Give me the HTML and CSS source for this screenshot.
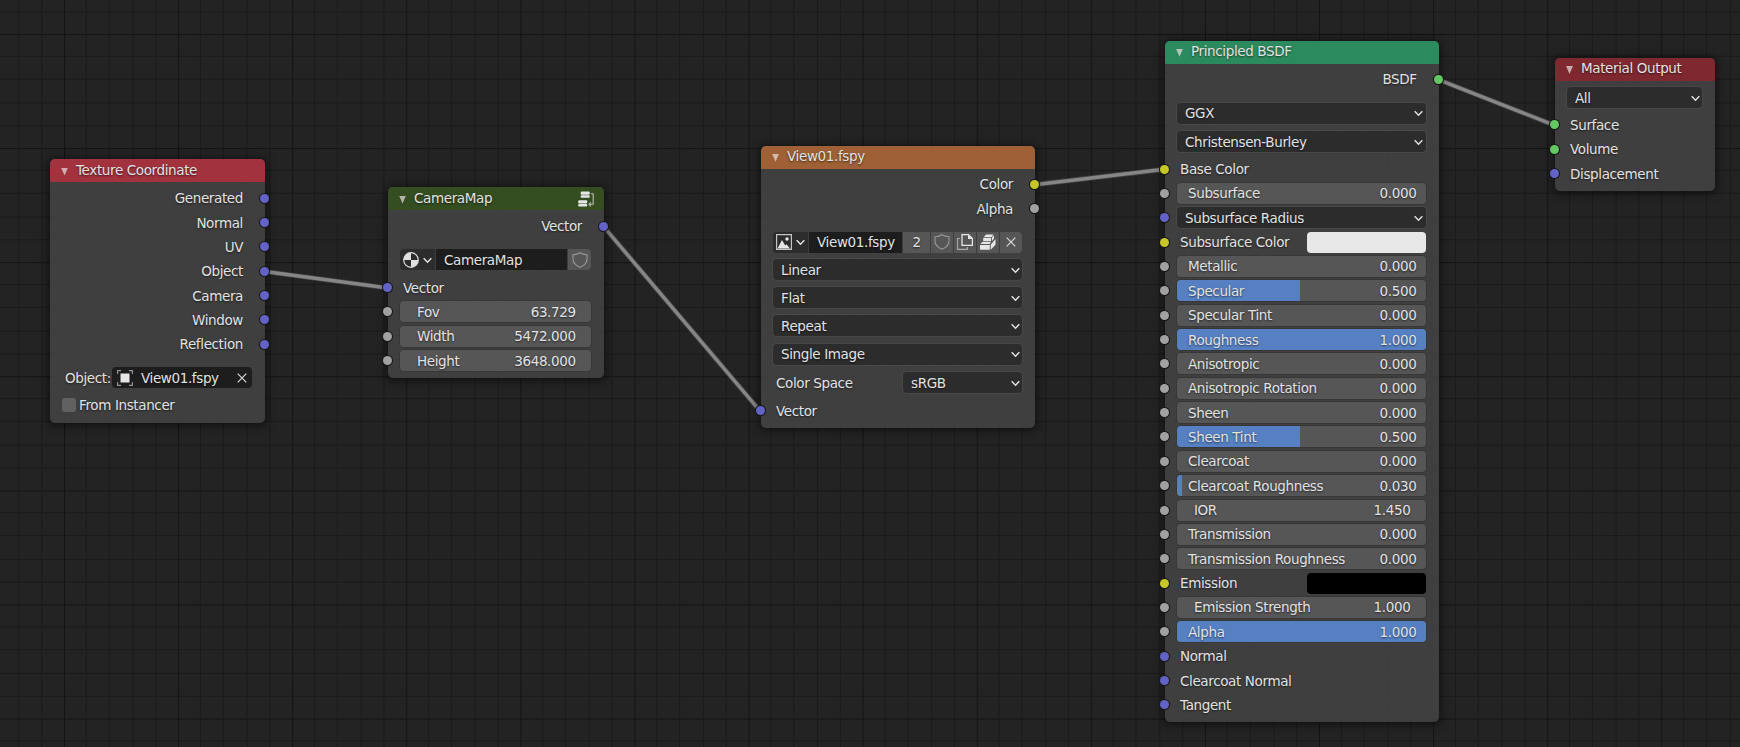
FILE: index.html
```
<!DOCTYPE html>
<html lang="en">
<head>
    <meta charset="UTF-8">
    <meta name="viewport" content="width=device-width, initial-scale=1.0">
    <title>Shader Editor</title>
    <link rel="stylesheet" href="styles.css">
</head>
<body>
    <svg class="symbols" width="0" height="0">
        <symbol id="chevron" viewBox="0 0 8 6"><path d="M.6 1 4 4.500 7.400 1" fill="none" stroke="currentColor" stroke-width="1.300"/></symbol>
        <symbol id="cross" viewBox="0 0 10 10"><path d="M.7.7 9.300 9.300M9.300.7.7 9.300" fill="none" stroke="currentColor" stroke-width="1.100"/></symbol>
        <symbol id="shield" viewBox="0 0 16 16"><path d="M8 .8C6 2.200 3.600 2.700 1 2.700V7c0 3.800 2.800 6.600 7 8.200C12.200 13.600 15 10.800 15 7V2.700C12.400 2.700 10 2.200 8 .8Z" fill="none" stroke="currentColor" stroke-width="1.100"/></symbol>
        <symbol id="object" viewBox="0 0 16 16"><path d="M3.500 3.500h9v9h-9z" fill="#e6e6e6"/><path d="M.6 4V.6H4M12 .6h3.400V4M15.400 12v3.400H12M4 15.400H.6V12" fill="none" stroke="#999" stroke-width="1.100"/></symbol>
        <symbol id="texture" viewBox="0 0 16 16"><circle cx="8" cy="8" r="7.300" fill="none" stroke="#e0e0e0" stroke-width="1.200"/><path d="M8 .8V8h7.200A7.200 7.200 0 0 1 8 15.200V8H.8A7.200 7.200 0 0 1 8 .8Z" fill="#e0e0e0"/></symbol>
        <symbol id="group" viewBox="0 0 16 16"><rect x="2.700" y=".5" width="9" height="3.300" rx="1"/><rect x="2.700" y="4.300" width="9" height="2.400" rx=".8"/><rect x=".2" y="9.300" width="9" height="3.300" rx="1"/><rect x=".2" y="13.100" width="9" height="2.400" rx=".8"/><path d="M12.800 2.700h2.400v10.600h-3.600M13 11.300l-2 2 2 2" fill="none" stroke="#b9c0b2" stroke-width="1.100"/></symbol>
        <symbol id="image" viewBox="0 0 16 16"><path d="M.6.6h14.800v14.800H.6z" fill="none" stroke="#c4c4c4" stroke-width="1.200"/><path d="M1.500 14.500 6 6l3.200 5.500 1.300-1.300 3.500 4.300z" fill="#e6e6e6"/><circle cx="11" cy="5" r="1.700" fill="#e6e6e6"/></symbol>
        <symbol id="copy" viewBox="0 0 16 16"><path d="M3 4.500H.6v10.900h9.800V13" fill="none" stroke="#aaa" stroke-width="1.100"/><path d="M5 .7h6.500l3.900 3.900v6.800H5z" fill="none" stroke="#e6e6e6" stroke-width="1.300"/><path d="M11 .7v4.400h4.400z" fill="#e6e6e6"/></symbol>
        <symbol id="pack" viewBox="0 0 16 16"><path d="M3.700 3.200 6 .5h7.500l-2 2.700zM3.200 4h7.900v3H3.200zM0 11h9.800v4.700H0zM.4 10 2.500 7.800h8.600L9.600 10zM12 3.500 14 1.200v3.300L12 7zM10.700 10.700 15.500 5v5.700l-4.800 5z"/></symbol>
    </svg>

    <main class="editor">
        <svg class="links" width="1740" height="747">
            <path class="link-edge" d="M264.700 271.500 388 288M603.500 226.500 760.500 411.500M1034.500 184.700 1164.500 169.300M1438.300 79.700 1554.700 125.300"/>
            <path class="link-core" d="M264.700 271.500 388 288M603.500 226.500 760.500 411.500M1034.500 184.700 1164.500 169.300M1438.300 79.700 1554.700 125.300"/>
        </svg>

        <section class="node texcoord">
            <h2 class="header red"><i class="arrow"></i>Texture Coordinate</h2>
            <div class="row out vector">Generated</div>
            <div class="row out vector">Normal</div>
            <div class="row out vector">UV</div>
            <div class="row out vector">Object</div>
            <div class="row out vector">Camera</div>
            <div class="row out vector">Window</div>
            <div class="row out vector">Reflection</div>
            <div class="object-row">
                <span>Object:</span>
                <div class="object-field"><svg class="icon"><use href="#object"/></svg><span>View01.fspy</span><svg class="cross"><use href="#cross"/></svg></div>
            </div>
            <div class="check-row"><i class="checkbox"></i>From Instancer</div>
        </section>

        <section class="node cameramap">
            <h2 class="header green-dark"><i class="arrow"></i>CameraMap<svg class="icon group-icon"><use href="#group"/></svg></h2>
            <div class="row out vector">Vector</div>
            <div class="datablock">
                <div class="cell pick"><svg class="icon"><use href="#texture"/></svg><svg class="chevron"><use href="#chevron"/></svg></div>
                <div class="cell name">CameraMap</div>
                <div class="cell button wide"><svg class="icon dim"><use href="#shield"/></svg></div>
            </div>
            <div class="row in vector">Vector</div>
            <div class="row in float"><div class="field number"><span>Fov</span><span>63.729</span></div></div>
            <div class="row in float"><div class="field number"><span>Width</span><span>5472.000</span></div></div>
            <div class="row in float"><div class="field number"><span>Height</span><span>3648.000</span></div></div>
        </section>

        <section class="node image">
            <h2 class="header orange"><i class="arrow"></i>View01.fspy</h2>
            <div class="row out color">Color</div>
            <div class="row out float">Alpha</div>
            <div class="datablock">
                <div class="cell pick"><svg class="icon"><use href="#image"/></svg><svg class="chevron"><use href="#chevron"/></svg></div>
                <div class="cell name">View01.fspy</div>
                <div class="cell button users">2</div>
                <div class="cell button"><svg class="icon dim"><use href="#shield"/></svg></div>
                <div class="cell button"><svg class="icon"><use href="#copy"/></svg></div>
                <div class="cell button"><svg class="icon"><use href="#pack"/></svg></div>
                <div class="cell button"><svg class="cross"><use href="#cross"/></svg></div>
            </div>
            <div class="menu-row"><div class="field menu">Linear<svg class="chevron"><use href="#chevron"/></svg></div></div>
            <div class="menu-row"><div class="field menu">Flat<svg class="chevron"><use href="#chevron"/></svg></div></div>
            <div class="menu-row"><div class="field menu">Repeat<svg class="chevron"><use href="#chevron"/></svg></div></div>
            <div class="menu-row"><div class="field menu">Single Image<svg class="chevron"><use href="#chevron"/></svg></div></div>
            <div class="menu-row split"><span>Color Space</span><div class="field menu">sRGB<svg class="chevron"><use href="#chevron"/></svg></div></div>
            <div class="row in vector">Vector</div>
        </section>

        <section class="node principled">
            <h2 class="header green"><i class="arrow"></i>Principled BSDF</h2>
            <div class="row out shader">BSDF</div>
            <div class="menu-row first"><div class="field menu">GGX<svg class="chevron"><use href="#chevron"/></svg></div></div>
            <div class="menu-row last"><div class="field menu">Christensen-Burley<svg class="chevron"><use href="#chevron"/></svg></div></div>
            <div class="row in color">Base Color</div>
            <div class="row in float"><div class="field slider"><span>Subsurface</span><span>0.000</span></div></div>
            <div class="row in vector"><div class="field menu">Subsurface Radius<svg class="chevron"><use href="#chevron"/></svg></div></div>
            <div class="row in color"><span>Subsurface Color</span><i class="swatch white"></i></div>
            <div class="row in float"><div class="field slider"><span>Metallic</span><span>0.000</span></div></div>
            <div class="row in float"><div class="field slider"><i class="fill" style="width: 49.4%"></i><span>Specular</span><span>0.500</span></div></div>
            <div class="row in float"><div class="field slider"><span>Specular Tint</span><span>0.000</span></div></div>
            <div class="row in float"><div class="field slider"><i class="fill" style="width: 100%"></i><span>Roughness</span><span>1.000</span></div></div>
            <div class="row in float"><div class="field slider"><span>Anisotropic</span><span>0.000</span></div></div>
            <div class="row in float"><div class="field slider"><span>Anisotropic Rotation</span><span>0.000</span></div></div>
            <div class="row in float"><div class="field slider"><span>Sheen</span><span>0.000</span></div></div>
            <div class="row in float"><div class="field slider"><i class="fill" style="width: 49.4%"></i><span>Sheen Tint</span><span>0.500</span></div></div>
            <div class="row in float"><div class="field slider"><span>Clearcoat</span><span>0.000</span></div></div>
            <div class="row in float"><div class="field slider"><i class="fill" style="width: 2%"></i><span>Clearcoat Roughness</span><span>0.030</span></div></div>
            <div class="row in float"><div class="field number"><span>IOR</span><span>1.450</span></div></div>
            <div class="row in float"><div class="field slider"><span>Transmission</span><span>0.000</span></div></div>
            <div class="row in float"><div class="field slider"><span>Transmission Roughness</span><span>0.000</span></div></div>
            <div class="row in color"><span>Emission</span><i class="swatch black"></i></div>
            <div class="row in float"><div class="field number"><span>Emission Strength</span><span>1.000</span></div></div>
            <div class="row in float"><div class="field slider"><i class="fill" style="width: 100%"></i><span>Alpha</span><span>1.000</span></div></div>
            <div class="row in vector">Normal</div>
            <div class="row in vector">Clearcoat Normal</div>
            <div class="row in vector">Tangent</div>
        </section>

        <section class="node output">
            <h2 class="header red-dark"><i class="arrow"></i>Material Output</h2>
            <div class="menu-row"><div class="field menu">All<svg class="chevron"><use href="#chevron"/></svg></div></div>
            <div class="row in shader">Surface</div>
            <div class="row in shader">Volume</div>
            <div class="row in vector">Displacement</div>
        </section>
    </main>
</body>
</html>
```
FILE: styles.css
```
* {
    margin: 0;
    padding: 0;
    box-sizing: border-box;
}

body {
    font-family: "DejaVu Sans", sans-serif;
    font-size: 13.5px;
    letter-spacing: -0.37px;
    color: #e2e2e2;
    background: #232323;
    overflow: hidden;
}

.symbols {
    position: absolute;
}

/* five small squares to one large square */
.editor {
    --lines: #131313 0 1px, transparent 1px 22px, #1a1a1a 22px 23px, transparent 23px 45px, #1a1a1a 45px 46px, transparent 46px 68px, #1a1a1a 68px 69px, transparent 69px 91px, #1a1a1a 91px 92px, transparent 92px;
    position: relative;
    width: 1740px;
    height: 747px;
    background-image:
        linear-gradient(to right, var(--lines)),
        linear-gradient(to bottom, var(--lines));
    background-size: 114.1px 100%, 100% 114.1px;
    background-position: 64px 0, 0 34px;
}

.links {
    position: absolute;
    top: 0;
    left: 0;
}

.link-edge {
    stroke: rgba(110, 110, 110, 0.4);
    stroke-width: 5.2;
}

.link-core {
    stroke: #868686;
    stroke-width: 3.4;
}

.node {
    position: absolute;
    display: flex;
    flex-direction: column;
    padding: 0 12.8px 0 12px;
    border-radius: 5px;
    background: rgba(65, 65, 65, 0.94);
    box-shadow: 0 1px 9px 2px rgba(0, 0, 0, 0.5);
    text-shadow: 0 1px 2px rgba(0, 0, 0, 0.6);
    white-space: nowrap;
}

.texcoord {
    left: 50px;
    top: 159px;
    width: 215px;
    height: 264px;
}

.cameramap {
    left: 388px;
    top: 187px;
    width: 216px;
    height: 191px;
}

.image {
    left: 761px;
    top: 146px;
    width: 274px;
    height: 282px;
}

.principled {
    left: 1165px;
    top: 41px;
    width: 273.7px;
    height: 680.5px;
}

.output {
    left: 1555px;
    top: 58px;
    width: 160px;
    height: 133px;
}

.header {
    display: flex;
    align-items: center;
    flex: none;
    height: 23px;
    margin: 0 -12.8px 4px -12px;
    padding: 0 10px 2px 11px;
    border-radius: 5px 5px 0 0;
    font-size: 13.5px;
    font-weight: normal;
}

.image .header,
.principled .header {
    height: 22.5px;
    margin-bottom: 3.5px;
    padding-bottom: 3px;
}

.output .header {
    margin-bottom: 2.6px;
    padding-bottom: 3px;
}

.red { background: rgba(165, 50, 62, 0.96); }
.red-dark { background: rgba(130, 40, 48, 0.96); }
.green { background: rgba(44, 143, 96, 0.96); }
.green-dark { background: rgba(52, 78, 32, 0.96); }
.orange { background: rgba(162, 98, 52, 0.96); }

.arrow {
    width: 7px;
    height: 8px;
    margin: 4px 8px 0 0;
    background: rgba(225, 215, 215, 0.75);
    clip-path: polygon(0 0, 100% 0, 50% 100%);
}

.icon {
    width: 16px;
    height: 16px;
    flex: none;
    fill: #e6e6e6;
}

.icon.dim {
    color: #999;
}

.chevron {
    width: 9px;
    height: 7px;
    margin-top: 1px;
    flex: none;
}

.cross {
    width: 10px;
    height: 10px;
    flex: none;
}

/* socket rows */
.row {
    position: relative;
    display: flex;
    align-items: center;
    flex: none;
    height: 24.37px;
    padding: 0 3px;
}

.row.out {
    justify-content: flex-end;
    padding-right: 9.200px;
}

.row::before {
    content: "";
    position: absolute;
    top: 7.7px;
    left: -17px;
    width: 9px;
    height: 9px;
    border-radius: 50%;
    background: #a1a1a1;
    box-shadow: 0 0 0 1px #161616;
}

.row.out::before {
    left: auto;
    right: -16.8px;
}

.row.vector::before { background: #6363c7; }
.row.color::before { background: #c7c729; }
.row.shader::before { background: #63c763; }

.row .field {
    margin: 0 -3px;
}

.field {
    position: relative;
    display: flex;
    align-items: center;
    justify-content: space-between;
    flex: 1;
    height: 21px;
    border-radius: 4px;
    overflow: hidden;
    background: #565656;
    box-shadow: 0 0 0 1px rgba(0, 0, 0, 0.12);
}

.field span {
    position: relative;
}

.slider {
    padding: 0 9.5px 0 11px;
}

.number {
    padding: 0 15.5px 0 17px;
}

.fill {
    position: absolute;
    top: 0;
    left: 0;
    height: 100%;
    background: #5680c2;
}

.menu {
    padding: 0 2.5px 0 8px;
    background: #2c2c2c;
    box-shadow: 0 0 0 1px rgba(255, 255, 255, 0.05);
}

.menu-row {
    display: flex;
    align-items: center;
    flex: none;
    height: 28.1px;
}

.split {
    margin-top: 0.5px;
}

.split span {
    width: 130px;
    padding-left: 3px;
}

.swatch {
    width: 119px;
    height: 21px;
    margin: 0 -3px 0 auto;
    border-radius: 4px;
}

.white { background: #e7e7e7; }
.black { background: #000; }

.datablock {
    display: flex;
    flex: none;
    height: 21px;
    border-radius: 4px;
    overflow: hidden;
    background: #3d3d3d;
    gap: 1px;
}

.cell {
    display: flex;
    align-items: center;
    justify-content: center;
    width: 22px;
}

.pick {
    width: 35px;
    gap: 4px;
    background: #2c2c2c;
}

.name {
    flex: 1;
    justify-content: flex-start;
    padding-left: 8px;
    background: #1d1d1d;
}

.button {
    background: #565656;
}

.users {
    width: 27px;
}

/* per-node spacing */
.object-row {
    display: flex;
    align-items: center;
    height: 21px;
    margin: 10.5px 0 0 3px;
}

.object-field {
    display: flex;
    align-items: center;
    flex: 1;
    height: 21px;
    margin-left: 1px;
    padding: 0 5px;
    gap: 8px;
    border-radius: 4px;
    background: #1d1d1d;
}

.object-field .cross {
    margin-left: auto;
}

.check-row {
    display: flex;
    align-items: center;
    gap: 3px;
    margin-top: 9px;
}

.checkbox {
    width: 14px;
    height: 14px;
    border-radius: 3px;
    background: #616161;
}

.group-icon {
    margin: 2px 0 0 auto;
}

.cameramap .datablock {
    margin: 11px 0 5px;
}

.button.wide {
    width: 23px;
}

.image .datablock {
    margin: 11px 0 3px;
}

.image .row.in {
    margin-top: 1.8px;
}

.menu-row.first {
    margin-top: 8px;
}

.menu-row.last {
    margin-bottom: 1.3px;
}

.output .menu-row {
    margin-bottom: 1px;
}
```
